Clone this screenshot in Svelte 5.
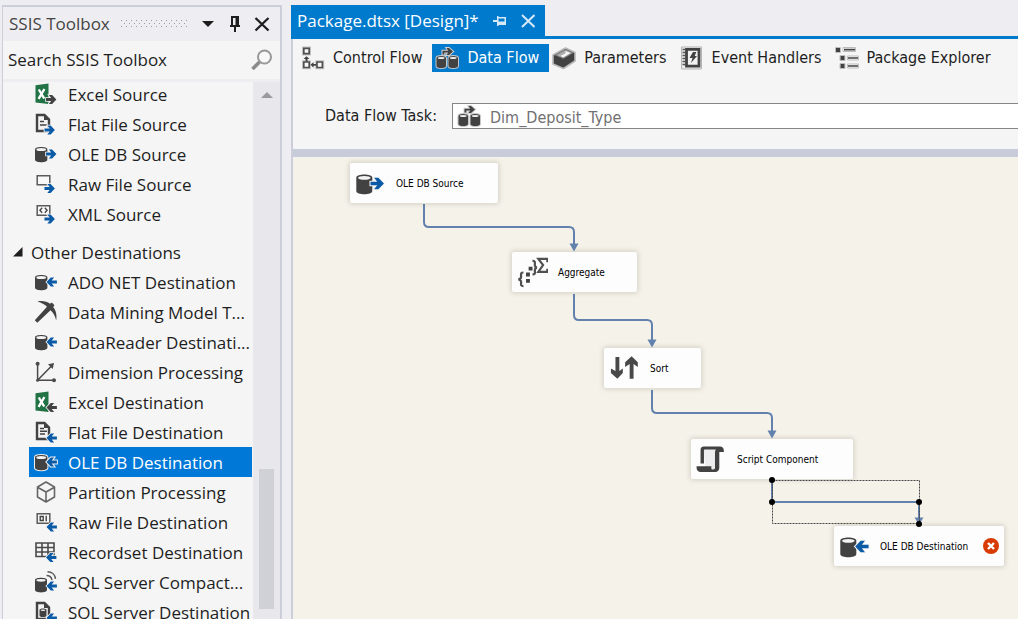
<script>
  const sources = [
    ['excelOut', 'Excel Source'],
    ['fileOut', 'Flat File Source'],
    ['dbOut', 'OLE DB Source'],
    ['rawOut', 'Raw File Source'],
    ['xmlOut', 'XML Source']
  ];
  const destinations = [
    ['dbIn', 'ADO NET Destination'],
    ['pick', 'Data Mining Model T...'],
    ['dbIn', 'DataReader Destinati...'],
    ['axes', 'Dimension Processing'],
    ['excelIn', 'Excel Destination'],
    ['fileIn', 'Flat File Destination'],
    ['dbIn', 'OLE DB Destination'],
    ['cube', 'Partition Processing'],
    ['rawIn', 'Raw File Destination'],
    ['grid', 'Recordset Destination'],
    ['compact', 'SQL Server Compact...'],
    ['sqlFile', 'SQL Server Destination']
  ];
  let selected = $state('OLE DB Destination');

  const views = [
    ['control', 'Control Flow'],
    ['data', 'Data Flow'],
    ['params', 'Parameters'],
    ['events', 'Event Handlers'],
    ['explorer', 'Package Explorer']
  ];
  let view = $state('Data Flow');

  const nodes = [
    { icon: 'dbOut', label: 'OLE DB Source', x: 57, y: 6, w: 148 },
    { icon: 'aggregate', label: 'Aggregate', x: 219, y: 95, w: 125 },
    { icon: 'sort', label: 'Sort', x: 311, y: 191, w: 97 },
    { icon: 'script', label: 'Script Component', x: 398, y: 282, w: 162 },
    { icon: 'dbIn', label: 'OLE DB Destination', x: 541, y: 369, w: 170, error: true }
  ];
</script>

{#snippet arrowRight(x, y, color)}
  <path transform="translate({x} {y})" fill={color} stroke="#f5f5f5" stroke-width="1.6" paint-order="stroke" d="M0 3.1h5.2L2.8 0h3.3L10.4 4.5 6.1 9H2.8l2.4-3.1H0z" />
{/snippet}

{#snippet arrowLeft(x, y, color)}
  <path class="halo" transform="translate({x} {y})" fill={color} stroke="#f5f5f5" stroke-width="1.6" paint-order="stroke" d="M10.4 3.1H5.2L7.6 0H4.3L0 4.5 4.3 9h3.3L5.2 5.9h5.2z" />
{/snippet}

{#snippet cylinder()}
  <path class="halo" fill="#424242" d="M1 7.4C1 4.3 13.4 4.3 13.4 7.4v10.4c0 3.3-12.4 3.3-12.4 0z" />
  <ellipse cx="7.2" cy="7.6" rx="4.9" ry="1.5" fill="#f3f3f3" />
{/snippet}

{#snippet page()}
  <path fill="#f3f3f3" stroke="#424242" stroke-width="2.4" d="M3 3h7.5L15 7.5V19H3z" />
  <path fill="#424242" d="M10 2v6h6z" />
{/snippet}

{#snippet excel()}
  <path fill="#217346" d="M1.5 3.2 14.5 1.5v20.5L1.5 20.5z" />
  <path stroke="#fff" stroke-width="2.4" fill="none" d="M4.8 7.5l5.4 9M10.4 7l-5.8 9.8" />
{/snippet}

{#snippet icon(name)}
  <svg viewBox="0 0 24 24" aria-hidden="true">
    {#if name === 'excelOut'}
      {@render excel()}
      {@render arrowRight(12, 13, '#424242')}
    {:else if name === 'excelIn'}
      {@render excel()}
      {@render arrowLeft(12.5, 13, '#424242')}
    {:else if name === 'fileOut'}
      {@render page()}
      <path stroke="#424242" stroke-width="1.4" d="M6 9.5h4M6 13h7" />
      {@render arrowRight(10.5, 13.5, '#0b5aa6')}
    {:else if name === 'fileIn'}
      {@render page()}
      <path stroke="#424242" stroke-width="1.4" d="M6 8.5h4M6 11.3h7M6 14h5" />
      {@render arrowLeft(12.5, 13.5, '#0b5aa6')}
    {:else if name === 'dbOut'}
      {@render cylinder()}
      {@render arrowRight(12, 7.5, '#0b5aa6')}
    {:else if name === 'dbIn'}
      {@render cylinder()}
      {@render arrowLeft(12.5, 7.5, '#0b5aa6')}
    {:else if name === 'rawOut'}
      <path fill="#f8f8f8" stroke="#5a5a5a" stroke-width="1.5" d="M3.2 3.7h12.6v9H3.2z" />
      {@render arrowRight(10.5, 12, '#0b5aa6')}
    {:else if name === 'xmlOut'}
      <path fill="#f8f8f8" stroke="#5a5a5a" stroke-width="1.5" d="M3.2 3.7h12.6v9.5H3.2z" />
      <path fill="none" stroke="#424242" stroke-width="1.3" d="M8.2 5.8 5.9 8.3l2.3 2.5M10.8 5.8l2.3 2.5-2.3 2.5" />
      {@render arrowRight(10.5, 12.5, '#0b5aa6')}
    {:else if name === 'rawIn'}
      <path fill="#f8f8f8" stroke="#5a5a5a" stroke-width="1.5" d="M3.2 3.7h12.6v9.5H3.2z" />
      <path fill="#f8f8f8" stroke="#424242" stroke-width="1.4" d="M6.2 6.5h3v4h-3zM12.2 5.8v5.4" />
      {@render arrowLeft(12.5, 12.5, '#0b5aa6')}
    {:else if name === 'pick'}
      <path fill="#424242" d="M3.5 1.5c5-1 9.500 0 12.500 2.300l1.800-1.300 2.700 2.700-1.300 1.800c3 3.500 3.800 8.500 3 13.500-1.200-5-3.200-8.200-5.700-10.200L3.300 22.800.8 20.300 13 6.800C10.500 4.300 7.500 2.700 3.500 1.500z" />
    {:else if name === 'axes'}
      <path fill="none" stroke="#4a4a4a" stroke-width="1.5" d="M3.600 3.500v16.800h16.800M3.600 20.300 17.500 6" />
      <path fill="#4a4a4a" d="M20 3l-1.300 6-4.700-4.700z" />
      <circle cx="3.600" cy="3.800" r="2" fill="#4a4a4a" />
      <circle cx="20" cy="20.300" r="2" fill="#4a4a4a" />
      <circle cx="3.600" cy="20.300" r="1.500" fill="#4a4a4a" />
    {:else if name === 'cube'}
      <path fill="#f5f5f5" stroke="#666" stroke-width="1.6" stroke-linejoin="round" d="M12 2l8.500 5v10L12 22l-8.500-5V7zM3.500 7.200 12 12l8.500-4.800M12 12v10" />
    {:else if name === 'grid'}
      <path fill="#f5f5f5" stroke="#4a4a4a" stroke-width="1.600" d="M2 3h18v13.500H2zM2 7.500h18M2 12h18M8 3v13.500M14 3v13.500" />
      {@render arrowLeft(12, 13, '#0b5aa6')}
    {:else if name === 'compact'}
      <path fill="#424242" d="M1 10c0-3 12-3 12 0v10c0 3.200-12 3.200-12 0z" />
      <ellipse cx="7" cy="10.300" rx="4.700" ry="1.400" fill="#f3f3f3" />
      <path fill="none" stroke="#5a5a5a" stroke-width="1.500" d="M12.500 5.500c3 0 5 2 5.500 4.500M13.500 1.800c4.500 0 7.500 3 8 7" />
      {@render arrowLeft(12.500, 11.500, '#0b5aa6')}
    {:else if name === 'sqlFile'}
      {@render page()}
      <path fill="#424242" d="M5.500 10c0-2 7-2 7 0v5.500c0 2-7 2-7 0z" />
      <ellipse cx="9" cy="10.200" rx="2.300" ry=".8" fill="#f3f3f3" />
      {@render arrowLeft(12.500, 13.500, '#0b5aa6')}
    {:else if name === 'control'}
      <path fill="none" stroke="#c4c4c4" stroke-width="4" d="M3 2.500h5v5H3zM3 16.200h5v5H3zM16.200 16.200h5v5h-5z" />
      <path fill="#f8f8f8" stroke="#505050" stroke-width="1.700" d="M2.800 2.300h5.400v5.400H2.800zM2.800 16h5.400v5.500H2.800zM16 16h5.400v5.500H16z" />
      <path fill="#424242" d="M5.500 10.300l3 2.700h-2v2.500h-2V13h-2zM9.500 18.800l3-2.800v2H15v1.700h-2.500v2z" />
    {:else if name === 'data'}
      <path fill="#424242" stroke="#c6c6c6" stroke-width="2" paint-order="stroke" d="M1.500 12c0-2.800 9.500-2.800 9.500 0v8c0 2.700-9.500 2.700-9.500 0zM13.500 12c0-2.800 9.500-2.800 9.500 0v8c0 2.700-9.500 2.700-9.500 0z" />
      <ellipse cx="6.200" cy="12" rx="3.400" ry="1" fill="#eee" />
      <ellipse cx="18.200" cy="12" rx="3.400" ry="1" fill="#eee" />
      <path fill="#424242" stroke="#cfcfcf" stroke-width="2" paint-order="stroke" d="M7.500 8.500V4.800h5.700L11.500 2H14l4 3.600-4 3.400h-2.500l1.700-2.400H9.300v1.900z" />
    {:else if name === 'params'}
      <path fill="#424242" stroke="#b8b8b8" stroke-width="1.600" stroke-linejoin="round" d="M1 9 13.500 2 23 6.500V15L11.500 22.500 1 18z" />
      <path fill="#8b8b8b" d="M2.500 9 13.500 3l8 3.700-10.200 6z" />
      <path fill="#f5f5f5" d="M6 9 13.500 4.800l5.300 2.300-7.500 4.400z" />
      <path fill="#a8a8a8" d="M6 9 13.500 4.800v2.400L8.300 10z" />
    {:else if name === 'events'}
      <path fill="#ececec" stroke="#b5b5b5" d="M1.500 1h20v22h-20z" />
      <path fill="#f2f2f2" stroke="#424242" stroke-width="2.800" d="M6.500 3.400h12.500v16.800H6.500z" />
      <path stroke="#555" stroke-width="1.300" d="M2.500 3.500H6M2.500 6.500H6M2.500 9.500H6M2.500 12.500H6M2.500 15.500H6M2.500 18.500H6" />
      <path fill="#424242" d="M13 6h3.300l-1.600 4H17L11 17l1.500-5h-3z" />
    {:else if name === 'explorer'}
      <path fill="#fafafa" stroke="#bdbdbd" d="M.5 1.500h5v5h-5zM8 1.500h12.500v4H8zM5 9.500h5v5H5zM12.500 10h11v4h-11zM5 17.500h5v5H5zM12.500 18h11v4h-11z" />
      <path fill="#424242" d="M1 2h4v4H1zM5.500 10h4v4h-4zM5.500 18h4v4h-4zM9 2.800h11v1.600H9zM13 11.200h10v1.600H13zM13 19.200h10v1.600H13z" />
    {:else if name === 'aggregate'}
      <path fill="none" stroke="#505050" stroke-width="1.700" d="M5 12c-2.500 0-1.800 1.500-1.800 3S2.500 17.200 1 17.300c1.500.1 2.200.9 2.200 2.300s-.7 3 1.800 3M12 3c2.500 0 1.800 1.500 1.800 3s.5 2 1.700 2.200c-1.200.1-1.700.8-1.700 2.300s.7 3-1.800 3M23.500 4V1.500h-7l3.700 4.700-3.700 5.300h7V9" />
      <path fill="#424242" d="M9 7.500h3v3H9zM7 12h3v3H7zM7 17h3v3H7z" />
    {:else if name === 'sort'}
      <path fill="#484848" d="M5 3h3v11l2.700-2v3.500L6.500 20 1.500 15.500V12L5 14zM16 20h3V8.500l3.300 2.300V7.200L17.500 2.500 12.500 7.200v3.600L16 8.500z" />
    {:else if name === 'script'}
      <g transform="translate(0 1) scale(.88)">
        <path fill="#ededf0" d="M6 2.500h13v17l-3 2.500H9z" />
        <path fill="#424242" d="M4 16V4c0-2 1.200-3 3-3h14c2.500 0 3.500 1.500 3.500 3.500V6H20.500v14c0 2-1.500 3.500-3.500 3.500H4c-2 0-3.500-1.500-3.500-4V18.500h13v2c0 1 2.300 1.300 3.200 0V6c0-1 .3-1.700.8-2.300H8c-.8 0-1 .5-1 1V16z" />
      </g>
    {/if}
  </svg>
{/snippet}

{#snippet toolItem(glyph, label)}
  <li>
    <button class="tool" class:selected={selected === label} onclick={() => (selected = label)}>
      {@render icon(glyph)}<span>{label}</span>
    </button>
  </li>
{/snippet}

<div class="ide">
  <aside class="toolbox">
    <header>
      <h1>SSIS Toolbox</h1>
      <svg class="grip" aria-hidden="true">
        <defs>
          <pattern id="grip" width="5" height="8" patternUnits="userSpaceOnUse">
            <path fill="#9a9aa2" d="M0 0h1v1H0zM3 3h1v1H3zM0 6h1v1H0z" />
          </pattern>
        </defs>
        <rect width="100%" height="8" fill="url(#grip)" />
      </svg>
      <button aria-label="Window position">
        <svg viewBox="0 0 16 16"><path fill="#1e1e1e" d="M2 5h12l-6 6z" /></svg>
      </button>
      <button aria-label="Auto hide">
        <svg viewBox="0 0 16 16"><path fill="#1e1e1e" fill-rule="evenodd" d="M4 0h8v9h1v2H9v5H7v-5H3V9h1zM6 2v7h2.500V2z" /></svg>
      </button>
      <button aria-label="Close">
        <svg viewBox="0 0 16 16"><path stroke="#1e1e1e" stroke-width="2.300" d="M1.500 2l13 12.500M14.500 2l-13 12.500" /></svg>
      </button>
    </header>
    <label class="search">
      <input type="text" aria-label="Search SSIS Toolbox" placeholder="Search SSIS Toolbox" />
      <svg viewBox="0 0 22 22" aria-hidden="true">
        <circle cx="13.500" cy="8" r="6.500" fill="#f8f8f8" stroke="#999" stroke-width="2" />
        <path stroke="#8a8a8a" stroke-width="3.500" d="M8.500 13 1.500 20" />
      </svg>
    </label>
    <div class="body">
      <div class="list">
        <ul>
          {#each sources as [glyph, label]}{@render toolItem(glyph, label)}{/each}
        </ul>
        <button class="group" aria-expanded="true">
          <svg viewBox="0 0 10 10" aria-hidden="true"><path fill="#1e1e1e" d="M9.500 0v9.500H0z" /></svg>
          <span>Other Destinations</span>
        </button>
        <ul>
          {#each destinations as [glyph, label]}{@render toolItem(glyph, label)}{/each}
        </ul>
      </div>
      <div class="scroll">
        <svg viewBox="0 0 12 6" aria-hidden="true"><path fill="#999aa0" d="M6 0l6 6H0z" /></svg>
        <div class="thumb"></div>
      </div>
    </div>
  </aside>

  <main>
    <div class="documents">
      <div class="document">
        <span>Package.dtsx [Design]*</span>
        <button aria-label="Pin tab">
          <svg viewBox="0 0 14 14"><path fill="#d5e9f8" fill-rule="evenodd" d="M0 6h4V2h1.500v1H13v8H5.500v1H4V8H0zM5.500 4.500v3h6v-3z" /></svg>
        </button>
        <button aria-label="Close tab">
          <svg viewBox="0 0 14 14"><path stroke="#d5e9f8" stroke-width="2" d="M1 1l12.500 12M13.500 1L1 13" /></svg>
        </button>
      </div>
    </div>
    <section class="designer">
      <nav>
        {#each views as [glyph, label]}
          <button class:active={view === label} onclick={() => (view = label)}>
            {@render icon(glyph)}{label}
          </button>
        {/each}
      </nav>
      <div class="task">
        <label for="task">Data Flow Task:</label>
        <div class="combo">
          {@render icon('data')}
          <select id="task"><option>Dim_Deposit_Type</option></select>
        </div>
      </div>
      <div class="canvas">
        {#each nodes as n}
          <div class="node" style="left:{n.x}px;top:{n.y}px;width:{n.w}px">
            {@render icon(n.icon)}
            <span>{n.label}</span>
            {#if n.error}
              <svg class="error" viewBox="0 0 16 16" role="img" aria-label="Error">
                <circle cx="8" cy="8" r="8" fill="#d83b01" />
                <path stroke="#fff" stroke-width="2.400" d="M5 5l6 6M11 5l-6 6" />
              </svg>
            {/if}
          </div>
        {/each}
        <svg class="links" aria-hidden="true">
          <g fill="none" stroke="#6281ad" stroke-width="2">
            <path d="M131 47v18q0 5 5 5h140q5 0 5 5v14" />
            <path d="M281 137v21q0 5 5 5h68q5 0 5 5v16" />
            <path d="M359 233v18q0 5 5 5h110q5 0 5 5v14" />
            <path d="M479 323v22h147v18" />
          </g>
          <path fill="#6281ad" d="M276.500 86.500h9l-4.500 8zM354.500 182.500h9l-4.500 8zM474.500 273.500h9l-4.500 8zM621.500 360.500h9l-4.500 7z" />
          <path fill="none" stroke="#444" stroke-dasharray="2 1" d="M479.500 323.500h147v43h-147z" />
          <circle cx="479" cy="323" r="3" /><circle cx="479" cy="345" r="3" />
          <circle cx="626" cy="345" r="3" /><circle cx="626" cy="367" r="3" />
        </svg>
      </div>
    </section>
  </main>
</div>

<style>
  :global(body) { margin: 0; background: #eeeef2; }
  * { box-sizing: border-box; }
  svg { display: block; flex: none; }
  button { border: 0; padding: 0; background: none; font: inherit; color: inherit; text-align: left; }
  ul { list-style: none; margin: 0; padding: 0; }

  .ide {
    display: flex;
    gap: 9px;
    height: 100vh;
    padding: 5px 0 0 2px;
    overflow: hidden;
    color: #1e1e1e;
    font: 17px/30px "Open Sans", sans-serif;
  }

  .toolbox {
    display: flex;
    flex-direction: column;
    flex: none;
    width: 280px;
    border: 2px solid #ccceda;
    border-bottom: 0;
    border-left-width: 1px;
  }
  .toolbox header { display: flex; align-items: center; height: 34px; padding: 0 10px 0 6px; gap: 11px; }
  h1 { margin: 0; font: inherit; color: #444; }
  .grip { flex: 1; min-width: 0; height: 8px; }
  header button svg { width: 16px; height: 16px; }
  .search { display: flex; align-items: center; height: 38px; padding: 0 7px 0 5px; background: #f5f5f5; }
  .search input { flex: 1; min-width: 0; border: 0; padding: 0; background: none; font: inherit; outline: 0; }
  .search input::placeholder { color: #1e1e1e; opacity: 1; }
  .search svg { width: 22px; height: 22px; }
  .body { display: flex; flex: 1; min-height: 0; margin-top: 3px; }
  .list { display: flex; flex: 1; flex-direction: column; justify-content: flex-start; gap: 8px; min-width: 0; overflow: hidden; background: #f5f5f5; }
  .list > * { flex: none; }
  .list ul:first-child { margin-top: -3px; }
  .list ul:last-child { margin-top: -8px; }
  .tool { display: flex; align-items: center; gap: 10px; width: calc(100% - 27px); height: 30px; margin-left: 26px; padding-left: 5px; white-space: nowrap; }
  .tool svg { width: 24px; height: 24px; }
  .tool span, .group span, .node span { padding-top: 2px; }
  .tool.selected { background: #0078d7; color: #fff; }
  .selected .halo { stroke: #f0f0f0; stroke-width: 2px; paint-order: stroke; }
  .group { display: flex; align-items: center; gap: 8px; height: 30px; padding-left: 10px; }
  .group svg { width: 10px; height: 10px; }
  .scroll { display: flex; flex: none; flex-direction: column; align-items: center; justify-content: space-between; width: 27px; padding: 10px 0; background: #e8e8ec; }
  .scroll svg { width: 12px; height: 6px; }
  .thumb { width: 15px; height: 27%; background: #d0d1d6; }

  main { display: flex; flex: 1; flex-direction: column; min-width: 0; }
  .documents { display: flex; border-bottom: 3px solid #007acc; }
  .document { display: flex; align-items: center; height: 31px; padding: 0 10px 0 6px; background: #007acc; color: #fff; }
  .document button { margin-left: 14px; }
  .document svg { width: 14px; height: 14px; }
  .designer { display: flex; flex: 1; flex-direction: column; min-height: 0; border-left: 2px solid #ccceda; background: #f5f5f5; font: 16px/28px "DejaVu Sans Condensed", "Open Sans", sans-serif; }
  nav { display: flex; padding: 5px 0 0 5px; }
  nav button { display: flex; align-items: center; gap: 8px; height: 28px; padding: 0 10px 0 3px; white-space: nowrap; }
  nav svg, .combo svg { width: 24px; height: 24px; }
  nav .active { background: #007acc; color: #fff; }
  .task { display: flex; align-items: center; gap: 15px; padding: 30px 0 19px 32px; white-space: nowrap; }
  .combo { display: flex; flex: 1; align-items: center; gap: 9px; height: 26px; padding-left: 4px; border: 1px solid #868686; border-right: 0; background: #fff; }
  .combo select { flex: 1; min-width: 0; height: 24px; padding: 0; border: 0; appearance: none; background: none; color: #717171; font: inherit; }
  .canvas { position: relative; flex: 1; min-height: 0; overflow: hidden; border-top: 8px solid #c8cbd9; background: #f5f2ea; }
  .node { position: absolute; display: flex; align-items: center; gap: 10px; height: 40px; padding: 0 5px; border-radius: 2px; background: #fdfdfe; box-shadow: 0 0 5px 1px #d2cec3; color: #000; font: 10px/16px "DejaVu Sans Condensed", "Open Sans", sans-serif; white-space: nowrap; }
  .node svg { width: 31px; height: 31px; }
  .node .error { width: 16px; height: 16px; margin-left: auto; }
  .links { position: absolute; inset: 0; width: 100%; height: 100%; }
</style>
